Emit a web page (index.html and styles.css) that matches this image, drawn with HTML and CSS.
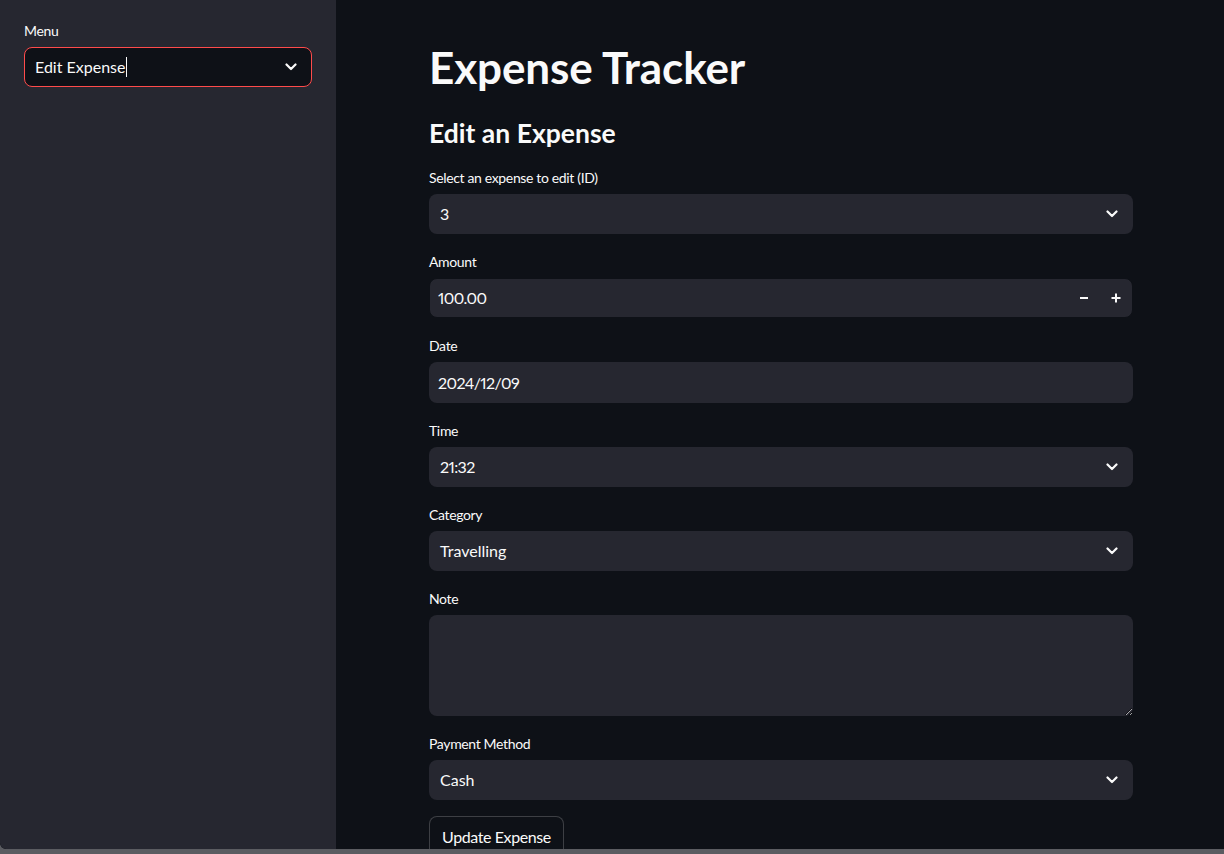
FILE: index.html
```html
<!DOCTYPE html>
<html lang="en">
<head>
<meta charset="utf-8">
<title>Expense Tracker</title>
<link rel="stylesheet" href="styles.css">
</head>
<body>
<div class="app">
  <aside class="sidebar">
    <div class="field">
      <div class="label">Menu</div>
      <div class="select select-focused">
        <span class="value">Edit Expense<span class="caret"></span></span>
        <svg class="chev" viewBox="0 0 12 8" width="12" height="8"><polyline points="1.5,1.5 6,6 10.5,1.5" fill="none" stroke="#fafafa" stroke-width="2.2" stroke-linecap="round" stroke-linejoin="round"/></svg>
      </div>
    </div>
  </aside>
  <main class="main">
    <div class="content">
      <h1 class="title">Expense Tracker</h1>
      <h2 class="subtitle">Edit an Expense</h2>

      <div class="field">
        <div class="label">Select an expense to edit (ID)</div>
        <div class="select">
          <span class="value">3</span>
          <svg class="chev" viewBox="0 0 12 8" width="12" height="8"><polyline points="1.5,1.5 6,6 10.5,1.5" fill="none" stroke="#fafafa" stroke-width="2.2" stroke-linecap="round" stroke-linejoin="round"/></svg>
        </div>
      </div>

      <div class="field">
        <div class="label">Amount</div>
        <div class="number">
          <span class="value num">100.00</span>
          <span class="step">
            <svg viewBox="0 0 12 12" width="12" height="12"><line x1="2" y1="6" x2="10" y2="6" stroke="#fafafa" stroke-width="2"/></svg>
          </span>
          <span class="step">
            <svg viewBox="0 0 12 12" width="12" height="12"><line x1="1.5" y1="6" x2="10.5" y2="6" stroke="#fafafa" stroke-width="2"/><line x1="6" y1="1.5" x2="6" y2="10.5" stroke="#fafafa" stroke-width="2"/></svg>
          </span>
        </div>
      </div>

      <div class="field">
        <div class="label">Date</div>
        <div class="input input-date"><span class="value num">2024/12/09</span></div>
      </div>

      <div class="field">
        <div class="label">Time</div>
        <div class="select">
          <span class="value num">21:32</span>
          <svg class="chev" viewBox="0 0 12 8" width="12" height="8"><polyline points="1.5,1.5 6,6 10.5,1.5" fill="none" stroke="#fafafa" stroke-width="2.2" stroke-linecap="round" stroke-linejoin="round"/></svg>
        </div>
      </div>

      <div class="field">
        <div class="label">Category</div>
        <div class="select">
          <span class="value">Travelling</span>
          <svg class="chev" viewBox="0 0 12 8" width="12" height="8"><polyline points="1.5,1.5 6,6 10.5,1.5" fill="none" stroke="#fafafa" stroke-width="2.2" stroke-linecap="round" stroke-linejoin="round"/></svg>
        </div>
      </div>

      <div class="field">
        <div class="label">Note</div>
        <textarea class="textarea" aria-label="Note"></textarea>
      </div>

      <div class="field">
        <div class="label">Payment Method</div>
        <div class="select">
          <span class="value">Cash</span>
          <svg class="chev" viewBox="0 0 12 8" width="12" height="8"><polyline points="1.5,1.5 6,6 10.5,1.5" fill="none" stroke="#fafafa" stroke-width="2.2" stroke-linecap="round" stroke-linejoin="round"/></svg>
        </div>
      </div>

      <div class="field">
        <button class="button" type="button">Update Expense</button>
      </div>
    </div>
  </main>
</div>
</body>
</html>
```

FILE: styles.css
```css
* { box-sizing: border-box; }

html, body {
  margin: 0;
  padding: 0;
  height: 854px;
  overflow: hidden;
}

body {
  background: #5b5c61;
  font-family: Lato, "Noto Sans", sans-serif;
  font-variant-numeric: proportional-nums;
  color: #fafafa;
}

.app {
  display: flex;
  height: 849px;
  overflow: hidden;
  background: #0e1117;
  border-bottom-left-radius: 6px;
}

.sidebar {
  width: 336px;
  flex: none;
  background: #262730;
  padding: 19px 24px 0 24px;
  border-bottom-left-radius: 6px;
}

.main {
  flex: 1;
  display: flex;
  justify-content: center;
  padding-left: 2px;
}

.content {
  width: 704px;
  padding-top: 41px;
  display: flex;
  flex-direction: column;
  gap: 16px;
}

.title {
  margin: 0;
  font-size: 44px;
  line-height: 52px;
  font-weight: 700;
  letter-spacing: -0.1px;
}

.subtitle {
  margin: 7px 0 0 0;
  font-size: 26.5px;
  line-height: 34px;
  font-weight: 700;
}

.field {
  display: flex;
  flex-direction: column;
}

.label {
  height: 24px;
  line-height: 24px;
  font-size: 14px;
  letter-spacing: -0.35px;
  margin-bottom: 4px;
}

.select, .input, .number {
  height: 40px;
  border-radius: 8px;
  background: #262730;
  display: flex;
  align-items: center;
  font-size: 16px;
}

.select {
  padding: 0 15px 0 11px;
  justify-content: space-between;
}

.select-focused {
  background: #0e1117;
  border: 1px solid #ff4b4b;
  padding-left: 10px;
  padding-right: 14px;
}

.value {
  display: flex;
  align-items: center;
  margin-top: -1px;
}

.num {
  letter-spacing: -0.6px;
}

.caret {
  display: inline-block;
  width: 1px;
  height: 20px;
  background: #fafafa;
  margin-left: 1px;
}

.chev { display: block; }

.input {
  padding: 0 9px;
}

.input-date {
  height: 41px;
}

.number {
  border: 1px solid #0e1117;
  padding-left: 8px;
}

.number .value { flex: 1; }

.step {
  width: 32px;
  height: 100%;
  display: flex;
  align-items: center;
  justify-content: center;
}

.textarea {
  height: 101px;
  border-radius: 8px;
  background: #262730;
  border: none;
  resize: vertical;
  color: #fafafa;
  font-family: inherit;
  font-size: 16px;
  padding: 8px 9px;
  outline: none;
}

.button {
  align-self: flex-start;
  height: 40px;
  padding: 0 12px;
  border-radius: 8px;
  border: 1px solid rgba(250, 250, 250, 0.2);
  background: #0e1117;
  color: #fafafa;
  font-family: inherit;
  font-size: 16px;
  letter-spacing: -0.4px;
}
```
